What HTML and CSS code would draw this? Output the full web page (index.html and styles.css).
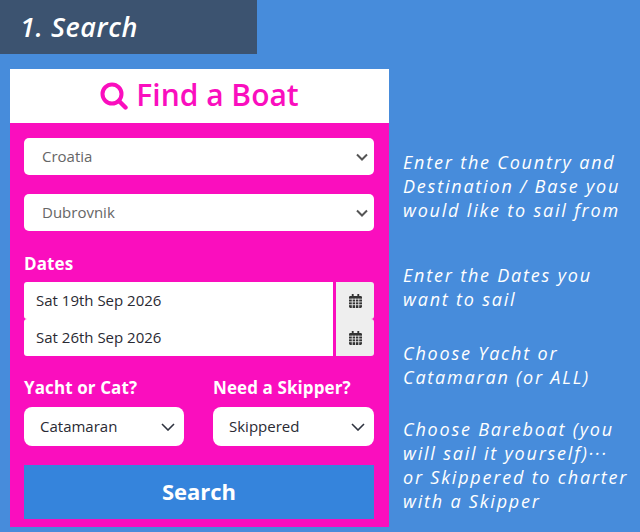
FILE: index.html
```html
<!DOCTYPE html>
<html lang="en">
<head>
<meta charset="utf-8">
<title>Find a Boat</title>
<link rel="stylesheet" href="styles.css">
</head>
<body>
<header class="step"><h1 class="step-title">1. Search</h1></header>
<main class="layout">
  <section class="card">
    <div class="card-head">
      <svg class="search-icon" viewBox="0 0 28 28" width="28" height="28" aria-hidden="true"><circle cx="12" cy="12" r="9.500" fill="none" stroke="currentColor" stroke-width="4"/><path d="M19 19l6.500 6.500" fill="none" stroke="currentColor" stroke-width="4.400" stroke-linecap="round"/></svg>
      <h2 class="card-title">Find a Boat</h2>
    </div>
    <form class="form">
      <div class="select wide"><span>Croatia</span><svg class="chev" viewBox="0 0 12 8" width="12" height="8"><path d="M1 1.500l5 5 5-5" fill="none" stroke="currentColor" stroke-width="2"/></svg></div>
      <div class="select wide second"><span>Dubrovnik</span><svg class="chev" viewBox="0 0 12 8" width="12" height="8"><path d="M1 1.500l5 5 5-5" fill="none" stroke="currentColor" stroke-width="2"/></svg></div>
      <div class="label dates-label">Dates</div>
      <div class="date"><span class="date-text">Sat 19th Sep 2026</span><span class="addon"><svg viewBox="0 0 14 15" width="13" height="14"><path fill="currentColor" d="M3 0h2v2h4V0h2v2h1.500A1.500 1.500 0 0 1 14 3.500V13.500A1.500 1.500 0 0 1 12.500 15h-11A1.500 1.500 0 0 1 0 13.500V3.500A1.500 1.500 0 0 1 1.500 2H3z"/><path stroke="#eee" stroke-width=".9" d="M0 5.500h14M0 8.500h14M0 11.500h14M3.500 5v10M7 5v10M10.500 5v10"/></svg></span></div>
      <div class="date"><span class="date-text">Sat 26th Sep 2026</span><span class="addon"><svg viewBox="0 0 14 15" width="13" height="14"><path fill="currentColor" d="M3 0h2v2h4V0h2v2h1.500A1.500 1.500 0 0 1 14 3.500V13.500A1.500 1.500 0 0 1 12.500 15h-11A1.500 1.500 0 0 1 0 13.500V3.500A1.500 1.500 0 0 1 1.500 2H3z"/><path stroke="#eee" stroke-width=".9" d="M0 5.500h14M0 8.500h14M0 11.500h14M3.500 5v10M7 5v10M10.500 5v10"/></svg></span></div>
      <div class="pair">
        <div class="col left">
          <div class="label">Yacht or Cat?</div>
          <div class="select small"><span>Catamaran</span><svg class="chev thin" viewBox="0 0 14 8" width="14" height="8"><path d="M1 1l6 6 6-6" fill="none" stroke="currentColor" stroke-width="1.600"/></svg></div>
        </div>
        <div class="col right">
          <div class="label">Need a Skipper?</div>
          <div class="select small"><span>Skippered</span><svg class="chev thin" viewBox="0 0 14 8" width="14" height="8"><path d="M1 1l6 6 6-6" fill="none" stroke="currentColor" stroke-width="1.600"/></svg></div>
        </div>
      </div>
      <button class="submit" type="button">Search</button>
    </form>
  </section>
  <aside class="notes">
    <p class="note n1">Enter the Country and<br>Destination / Base you<br>would like to sail from</p>
    <p class="note n2">Enter the Dates you<br>want to sail</p>
    <p class="note n3">Choose Yacht or<br>Catamaran (or ALL)</p>
    <p class="note n4">Choose Bareboat (you<br>will sail it yourself)···<br>or Skippered to charter<br>with a Skipper</p>
  </aside>
</main>
</body>
</html>
```
FILE: styles.css
```css
* { box-sizing: border-box; }
html, body { margin: 0; padding: 0; }
body {
  width: 640px;
  height: 532px;
  overflow: hidden;
  background: #478cdb;
  font-family: "Open Sans", sans-serif;
}
.step {
  width: 257px;
  height: 54px;
  background: #3c5370;
  padding-left: 20px;
  display: flex;
  align-items: center;
}
.step-title {
  margin: 0 0 2px;
  color: #fff;
  font: italic 600 27px/1 "Open Sans", cursive;
  letter-spacing: .6px;
}
.layout { display: flex; padding: 15px 0 0 10px; }
.card { width: 379px; height: 458px; background: #fa0ebe; }
.card-head {
  height: 54px;
  padding-bottom: 3px;
  background: #fff;
  color: #fa0ebe;
  display: flex;
  align-items: center;
  justify-content: center;
  gap: 8px;
}
.search-icon { margin-top: 3px; }
.card-title { margin: 0; font: 600 30px/1 "Open Sans", sans-serif; }
.form { padding: 15px 15px 0 14px; }
.select {
  background: #fff;
  border-radius: 5px;
  display: flex;
  align-items: center;
  justify-content: space-between;
}
.select span { padding-bottom: 2px; }
.wide { height: 37px; padding: 0 6px 0 18px; font-size: 15px; color: #666; }
.second { margin-top: 19px; }
.chev { color: #555; }
.label { color: #fff; font-weight: 700; font-size: 17px; line-height: 22px; letter-spacing: .1px; }
.dates-label { margin-top: 22px; margin-bottom: 7px; }
.date { height: 37px; display: flex; gap: 3px; }
.date-text {
  width: 309px;
  background: #fff;
  padding: 0 0 2px 12px;
  display: flex;
  align-items: center;
  font-size: 15px;
  color: #2a2a33;
  border-radius: 3px 0 0 3px;
}
.addon {
  width: 38px;
  background: #eee;
  color: #333;
  display: flex;
  align-items: center;
  justify-content: center;
  border-radius: 0 3px 3px 0;
}
.pair { display: flex; justify-content: space-between; margin-top: 21px; }
.left { width: 160px; }
.right { width: 161px; }
.pair .label { margin-bottom: 8px; }
.small { height: 39px; padding: 0 9px 0 16px; font-size: 15px; color: #2a2a33; border-radius: 8px; }
.thin { color: #2f3440; }
.submit {
  display: block;
  width: 100%;
  height: 54px;
  margin-top: 19px;
  padding-bottom: 3px;
  border: 0;
  background: #3584dc;
  color: #fff;
  font: 700 22px/1 "Open Sans", sans-serif;
}
.notes { padding: 81px 0 0 14px; color: #fff; }
.note {
  margin: 0;
  font: italic 500 18px/24px "Open Sans", cursive;
  letter-spacing: 1.800px;
  white-space: nowrap;
}
.n2 { margin-top: 41px; }
.n3 { margin-top: 30px; }
.n4 { margin-top: 28px; }
```
